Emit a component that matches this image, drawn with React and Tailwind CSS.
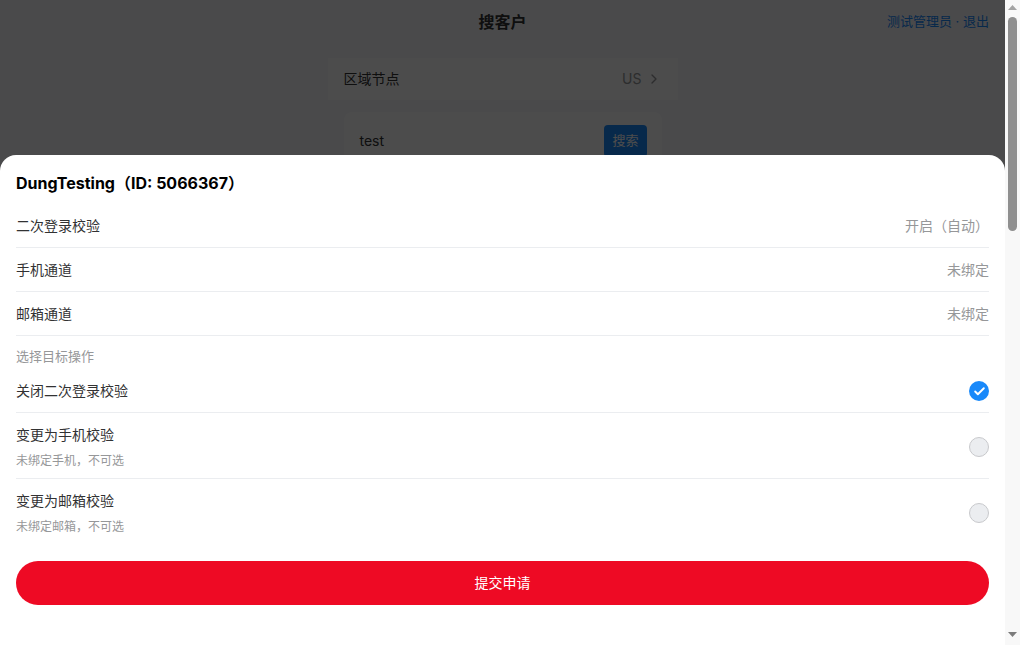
import { Check, ChevronRight } from 'lucide-react'

const font = { fontFamily: 'Inter, "Noto Sans CJK SC", sans-serif' }

const infoRows = [
  { label: '二次登录校验', value: '开启（自动）' },
  { label: '手机通道', value: '未绑定' },
  { label: '邮箱通道', value: '未绑定' },
]

const options = [
  { label: '关闭二次登录校验', checked: true },
  { label: '变更为手机校验', note: '未绑定手机，不可选' },
  { label: '变更为邮箱校验', note: '未绑定邮箱，不可选' },
]

function Radio({ checked }) {
  if (checked) {
    return (
      <span className="flex h-5 w-5 items-center justify-center rounded-full bg-[#1989fa]">
        <Check size={13} strokeWidth={3.5} className="text-white" />
      </span>
    )
  }
  return <span className="h-5 w-5 rounded-full border border-[#c8c9cc] bg-[#ebedf0]" />
}

function SearchPage() {
  return (
    <div className="h-full bg-[#f7f8fa] text-[#323233]">
      <header className="relative flex h-[44px] items-center justify-center">
        <h1 className="text-base font-bold">搜客户</h1>
        <div className="absolute right-4 top-0 flex h-[44px] items-center text-[13px] text-[#1989fa]">
          测试管理员 · 退出
        </div>
      </header>
      <div className="mx-auto mt-[14px] w-[350px]">
        <div className="flex h-[42px] items-center justify-between bg-white px-4 text-sm">
          <span>区域节点</span>
          <span className="flex items-center gap-1 text-[#969799]">
            US
            <ChevronRight size={16} />
          </span>
        </div>
        <div className="mx-4 mt-3 flex h-[58px] items-center justify-between rounded-lg bg-white pl-4 pr-[15px]">
          <span className="text-sm">test</span>
          <button className="h-8 rounded bg-[#1989fa] px-2 text-[13px] text-white">搜索</button>
        </div>
      </div>
    </div>
  )
}

function ActionSheet() {
  return (
    <div className="absolute inset-x-0 bottom-0 rounded-t-2xl bg-white px-4 pb-[40px] pt-4 text-[#323233]">
      <h2 className="text-base font-bold leading-6 text-black">DungTesting（ID: 5066367）</h2>
      <div className="mt-[9px]">
        {infoRows.map((row) => (
          <div key={row.label} className="flex h-[44px] items-center justify-between border-b border-[#ebedf0] text-sm">
            <span>{row.label}</span>
            <span className="text-[#969799]">{row.value}</span>
          </div>
        ))}
      </div>
      <div className="pb-[5px] pt-[11px] text-[13px] leading-[18px] text-[#969799]">选择目标操作</div>
      {options.map((opt, i) => (
        <div
          key={opt.label}
          className={`flex items-center justify-between ${i < options.length - 1 ? 'border-b border-[#ebedf0]' : ''} ${opt.note ? 'pb-[9px] pt-3' : 'py-[11px]'}`}
        >
          <div>
            <div className="text-sm leading-5">{opt.label}</div>
            {opt.note && <div className="mt-[7px] text-xs leading-[17px] text-[#969799]">{opt.note}</div>}
          </div>
          <Radio checked={opt.checked} />
        </div>
      ))}
      <button className="mt-[17px] h-[44px] w-full rounded-full bg-[#ee0a24] text-sm text-white">提交申请</button>
    </div>
  )
}

// drawn stand-in for the browser's scrollbar
function Scrollbar() {
  return (
    <div className="flex w-[15px] flex-col items-center bg-[#f8f8f8] pt-[5px]">
      <svg width="9" height="5" viewBox="0 0 9 5"><path d="M4.5 0L9 5H0z" fill="#a3a3a3" /></svg>
      <div className="mt-[7px] h-[214px] w-[9px] rounded-full bg-[#8f8f8f]" />
      <div className="flex-1" />
      <svg width="9" height="5" viewBox="0 0 9 5" className="mb-[8px]"><path d="M0 0H9L4.5 5z" fill="#7b7b7b" /></svg>
    </div>
  )
}

export default function App() {
  return (
    <div style={font} className="flex h-[645px] overflow-hidden">
      <div className="relative flex-1">
        <SearchPage />
        <div className="absolute inset-0 bg-black/70" />
        <ActionSheet />
      </div>
      <Scrollbar />
    </div>
  )
}
